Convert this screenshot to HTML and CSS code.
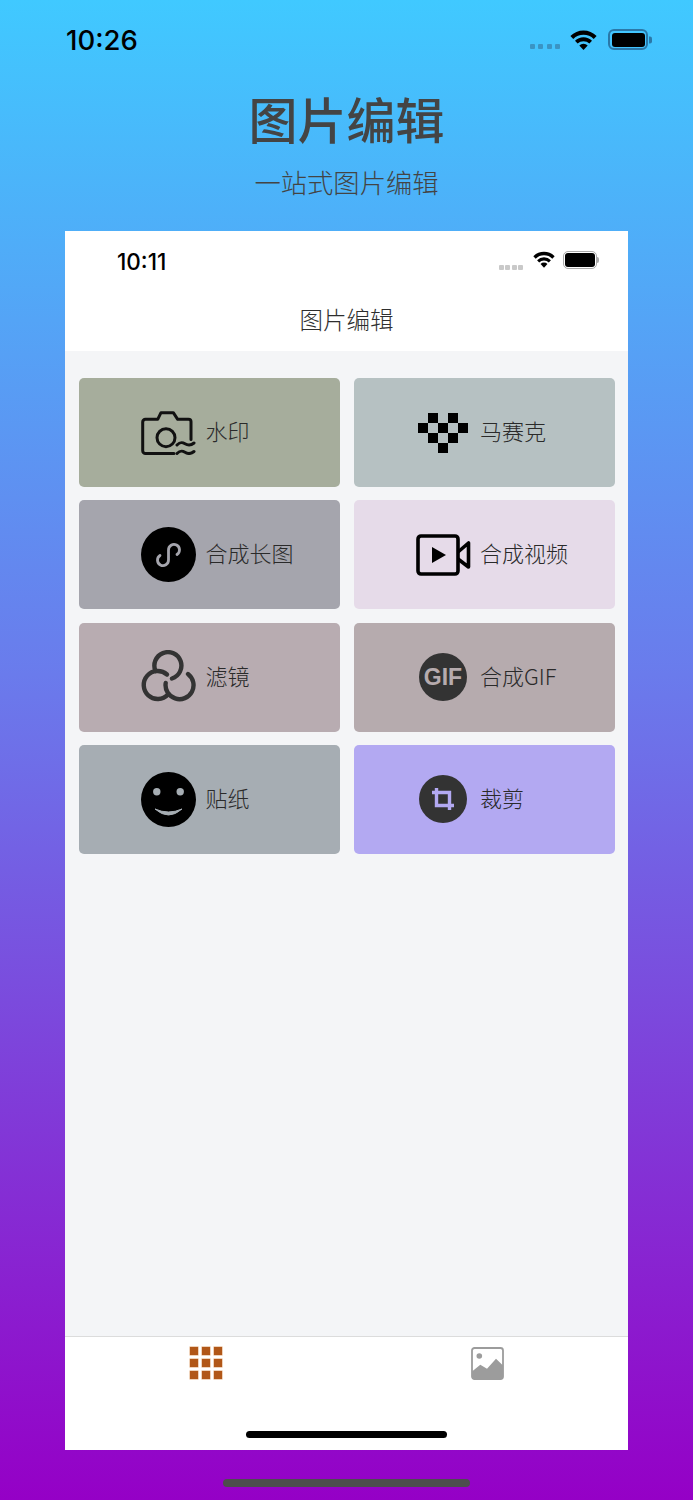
FILE: index.html
```html
<!DOCTYPE html>
<html lang="zh">
<head>
<meta charset="utf-8">
<title>图片编辑</title>
<link rel="stylesheet" href="styles.css">
</head>
<body>
<div class="page">
  <header class="status outer-status">
    <span class="time">10:26</span>
    <div class="status-icons">
      <span class="dots"><i></i><i></i><i></i><i></i></span>
      <svg class="wifi" viewBox="0 0 27 20"><path d="M13.5 20l-4.2-4.6a6 6 0 0 1 8.4 0z"/><path d="M7.6 13.6L5 10.8a12 12 0 0 1 17 0l-2.6 2.8a8.4 8.4 0 0 0-11.8 0z"/><path d="M3.3 9L.4 6a18.6 18.6 0 0 1 26.2 0l-2.9 3a14.6 14.6 0 0 0-20.4 0z"/></svg>
      <span class="battery"><span class="battery-fill"></span></span>
    </div>
  </header>
  <div class="hero">
    <h1>图片编辑</h1>
    <p>一站式图片编辑</p>
  </div>
  <main class="screen">
    <div class="status inner-status">
      <span class="time">10:11</span>
      <div class="status-icons">
        <span class="dots"><i></i><i></i><i></i><i></i></span>
        <svg class="wifi" viewBox="0 0 27 20"><path d="M13.5 20l-4.2-4.6a6 6 0 0 1 8.4 0z"/><path d="M7.6 13.6L5 10.8a12 12 0 0 1 17 0l-2.6 2.8a8.4 8.4 0 0 0-11.8 0z"/><path d="M3.3 9L.4 6a18.6 18.6 0 0 1 26.2 0l-2.9 3a14.6 14.6 0 0 0-20.4 0z"/></svg>
        <span class="battery"><span class="battery-fill"></span></span>
      </div>
    </div>
    <div class="navbar">图片编辑</div>
    <section class="content">
      <a class="card c-sage">
        <span class="icon"><svg viewBox="0 0 55 44" fill="none" stroke="#111" stroke-width="3" stroke-linecap="round" stroke-linejoin="round"><path d="M33 42.500H4.500a2.800 2.800 0 0 1-2.800-2.800V11a2.700 2.700 0 0 1 2.700-2.700H16.700L20 1.700H32.300L36.700 8.300H47.500a2.500 2.500 0 0 1 2.500 2.500V28.500"/><circle cx="25" cy="26.700" r="9"/><path d="M36 34c3-3 5-3 8-1.200s6 1.700 9-.8M36 42.500c3-3 5-3 8-1.200s6 1.700 9-.8"/></svg></span>
        <span class="label">水印</span>
      </a>
      <a class="card c-blue">
        <span class="icon"><svg viewBox="0 0 50 40"><path d="M10 0h10v10H10zM30 0h10v10H30zM0 10h10v10H0zM20 10h10v10H20zM40 10h10v10H40zM10 20h10v10H10zM30 20h10v10H30zM20 30h10v10H20z"/></svg></span>
        <span class="label">马赛克</span>
      </a>
      <a class="card c-gray">
        <span class="icon"><svg viewBox="0 0 55 55"><circle cx="27.500" cy="27.500" r="27.500"/><path d="M36 27.500A5.500 5.500 0 1 0 27.500 23V33A5.500 5.500 0 1 1 19 28.500" fill="none" stroke="#a5a5ad" stroke-width="2.800" stroke-linecap="round"/></svg></span>
        <span class="label">合成长图</span>
      </a>
      <a class="card c-pink">
        <span class="icon"><svg viewBox="0 0 55 42" fill="none" stroke="#000" stroke-width="3.600" stroke-linejoin="round"><rect x="2" y="2" width="40" height="38" rx="3"/><path d="M42 18L52.500 9V33L42 25"/><path d="M16 13l14 8-14 8z" fill="#000" stroke="none"/></svg></span>
        <span class="label">合成视频</span>
      </a>
      <a class="card c-mauve">
        <span class="icon"><svg viewBox="0 0 55 55" fill="none" stroke="#333" stroke-width="4.400" stroke-linecap="round"><path d="M14.500 21A13.500 13.500 0 1 1 31 28.500"/><path d="M26 24.500A14 14 0 1 0 27 44.500"/><path d="M24.700 33A14 14 0 1 0 47 24"/></svg></span>
        <span class="label">滤镜</span>
      </a>
      <a class="card c-taupe">
        <span class="icon"><span class="badge gif">GIF</span></span>
        <span class="label">合成GIF</span>
      </a>
      <a class="card c-slate">
        <span class="icon"><svg viewBox="0 0 55 55"><circle cx="27.500" cy="27.500" r="27.500"/><circle cx="15.800" cy="19.800" r="3.700" fill="#a6adb3"/><circle cx="39.200" cy="19.800" r="3.700" fill="#a6adb3"/><path d="M14 37Q27.500 49 41 37Q27.500 43 14 37z" fill="#a6adb3" stroke="#a6adb3" stroke-width="1" stroke-linejoin="round"/></svg></span>
        <span class="label">贴纸</span>
      </a>
      <a class="card c-violet">
        <span class="icon"><span class="badge"><svg class="crop" viewBox="0 0 22 22" fill="none" stroke="#b3a9f2" stroke-width="3.400"><path d="M0 4.500h17.500V22M4.500 0v17.500H22"/></svg></span></span>
        <span class="label">裁剪</span>
      </a>
    </section>
    <nav class="tabbar">
      <div class="tabs">
        <div class="tab">
          <span class="grid-icon"><i></i><i></i><i></i><i></i><i></i><i></i><i></i><i></i><i></i></span>
        </div>
        <div class="tab">
          <svg class="pic" viewBox="0 0 33 33"><rect x="1" y="1" width="31" height="31" rx="2.500" fill="#fff" stroke="#9c9c9c" stroke-width="1.800"/><circle cx="8.300" cy="9" r="2.800" fill="#9c9c9c"/><path d="M1 24.500L9.300 17.700 16 21.700 25 11.700 32 18.500V30a2 2 0 0 1-2 2H3a2 2 0 0 1-2-2z" fill="#9c9c9c"/></svg>
        </div>
      </div>
      <div class="home-row"><span class="home inner-home"></span></div>
    </nav>
  </main>
  <div class="home-row outer-row"><span class="home outer-home"></span></div>
</div>
</body>
</html>
```
FILE: styles.css
```css
* { box-sizing: border-box; margin: 0; padding: 0; }
html, body { height: 1500px; overflow: hidden; }
body { font-family: "Noto Sans CJK SC", "Noto Sans", sans-serif; }
.page {
  height: 1500px;
  display: flex;
  flex-direction: column;
  align-items: center;
  background: linear-gradient(180deg, #40c9ff 0%, #6a7bec 45%, #9500c6 100%);
}
.status { display: flex; justify-content: space-between; width: 100%; }
.time { font-family: Inter, "Liberation Sans", sans-serif; font-weight: 500; color: #000; }
.status-icons { display: flex; align-items: flex-start; }
.dots { display: flex; }
.dots i { background: currentColor; border-radius: 1px; }
.wifi { display: block; }
.battery { display: block; position: relative; border-style: solid; }
.battery::after {
  content: "";
  position: absolute;
  top: 50%;
  transform: translateY(-50%);
  background: currentColor;
  border-radius: 0 2px 2px 0;
}
.battery-fill { display: block; height: 100%; background: #000; }

.outer-status { padding: 23px 45px 0 66px; height: 83px; }
.outer-status .time { font-size: 27.500px; line-height: 34px; }
.outer-status .status-icons { padding-top: 6px; }
.outer-status .dots { color: #3a94c4; gap: 3.500px; margin: 15px 10px 0 0; }
.outer-status .dots i { width: 5px; height: 5px; }
.outer-status .wifi { width: 27px; height: 20px; fill: #000; margin: 1px 11px 0 0; }
.outer-status .battery { width: 40px; height: 21px; border-width: 2px; border-color: #2a78a8; border-radius: 6px; padding: 1.500px; color: #2a78a8; }
.outer-status .battery::after { left: 39px; width: 3px; height: 7px; }
.outer-status .battery-fill { border-radius: 3px; }

.hero { text-align: center; color: #444; height: 148px; }
.hero h1 { font-size: 49px; font-weight: 500; line-height: 70px; }
.hero p { font-size: 26.300px; font-weight: 300; line-height: 38px; margin-top: 10px; }

.screen {
  width: 563px;
  height: 1219px;
  background: #f4f5f7;
  display: flex;
  flex-direction: column;
}
.inner-status { background: #fff; height: 58px; padding: 16px 31px 0 52px; }
.inner-status .time { font-size: 22.500px; line-height: 30px; }
.inner-status .status-icons { padding-top: 4px; }
.inner-status .dots { color: #c9c9c9; gap: 1.500px; margin: 14px 10px 0 0; }
.inner-status .dots i { width: 5px; height: 5px; }
.inner-status .wifi { width: 22px; height: 17px; fill: #000; margin-right: 8px; }
.inner-status .battery { width: 34px; height: 18px; border-width: 1.500px; border-color: #aaa; border-radius: 5px; padding: 1px; color: #aaa; }
.inner-status .battery::after { left: 33px; width: 2px; height: 6px; }
.inner-status .battery-fill { border-radius: 3px; }

.navbar {
  background: #fff;
  height: 62px;
  text-align: center;
  font-size: 23.500px;
  font-weight: 300;
  line-height: 60px;
  color: #2e2e2e;
}

.content {
  flex: 1;
  display: grid;
  grid-template-columns: 261px 261px;
  grid-auto-rows: 109px;
  column-gap: 13.500px;
  row-gap: 13.330px;
  padding: 27px 14px 0;
  align-content: start;
}
.card {
  display: flex;
  align-items: center;
  gap: 9.500px;
  padding-left: 62px;
  border-radius: 5px;
  color: #2a2a2a;
}
.c-sage { background: #a6ad9c; }
.c-blue { background: #b6c1c2; }
.c-gray { background: #a5a5ad; }
.c-pink { background: #e6dbe9; }
.c-mauve { background: #b8acb1; }
.c-taupe { background: #b6abae; }
.c-slate { background: #a6adb3; }
.c-violet { background: #b3a9f2; }
.icon { width: 55px; height: 55px; display: flex; align-items: center; justify-content: center; flex: none; }
.icon svg { display: block; width: 55px; height: auto; }
.c-blue .icon svg { width: 50px; }
.label { font-size: 22px; font-weight: 300; line-height: 30px; padding-bottom: 5px; }
.badge {
  width: 48px;
  height: 48px;
  border-radius: 50%;
  background: #333;
  color: #b6abae;
  display: flex;
  align-items: center;
  justify-content: center;
}
.gif { font-family: "Liberation Sans", sans-serif; font-size: 23px; font-weight: 700; }
.icon .crop { width: 22px; height: 22px; }

.tabbar {
  height: 114px;
  background: #fff;
  border-top: 1px solid #dcdcdc;
  display: flex;
  flex-direction: column;
}
.tabs { display: flex; padding-top: 9.500px; height: 94px; }
.tab { flex: 1; display: flex; justify-content: center; }
.grid-icon { display: grid; grid-template-columns: repeat(3, 8px); grid-auto-rows: 8px; gap: 4px; width: 32px; height: 32px; margin-top: 0.500px; }
.grid-icon i { background: #b15718; box-shadow: 0 0 0 0.500px #e0a878; }
.pic { width: 33px; height: 33px; display: block; }
.home-row { display: flex; justify-content: center; }
.home { display: block; border-radius: 4px; }
.inner-home { width: 201px; height: 7px; background: #000; }
.outer-row { padding-top: 29px; }
.outer-home { width: 247px; height: 8px; background: #4d4d4d; }
```
